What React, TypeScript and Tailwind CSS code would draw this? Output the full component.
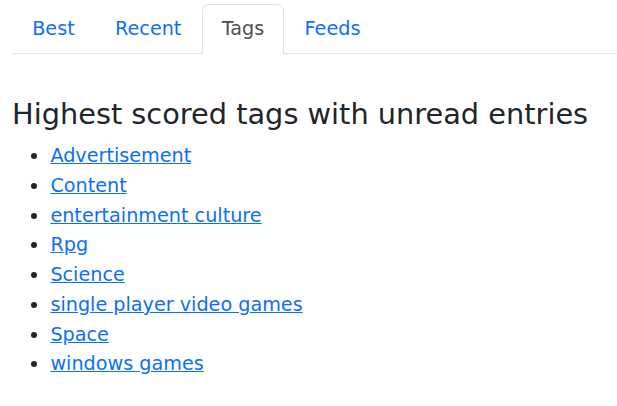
import React from 'react';

const tabs = ['Best', 'Recent', 'Tags', 'Feeds'];

const tags = [
  'Advertisement',
  'Content',
  'entertainment culture',
  'Rpg',
  'Science',
  'single player video games',
  'Space',
  'windows games',
];

const App = () => {
  return (
    <div className="min-h-screen bg-white pl-3 pt-1 text-[#212529]" style={{ fontFamily: '"DejaVu Sans", sans-serif' }}>
      <ul className="flex border-b border-[#dee2e6]">
        {tabs.map((tab) => {
          const active = tab === 'Tags';
          return (
            <li key={tab} className="-mb-px">
              <a
                href="#"
                className={
                  active
                    ? 'block rounded-t-[7px] border border-[#dee2e6] border-b-white bg-white px-[19.2px] py-[9.6px] text-[19.2px] leading-[28.8px] text-[#495057]'
                    : 'block rounded-t-[7px] border border-transparent px-[19.2px] py-[9.6px] text-[19.2px] leading-[28.8px] text-[#0d6efd]'
                }
              >
                {tab}
              </a>
            </li>
          );
        })}
      </ul>

      <h2 className="mt-[43px] mb-[9.6px] text-[28.8px] leading-[34.56px] font-normal">
        Highest scored tags with unread entries
      </h2>
      <ul className="list-disc pl-[2em] text-[19.2px] leading-[29.75px]">
        {tags.map((tag) => (
          <li key={tag}>
            <a href="#" className="text-[#0d6efd] underline">
              {tag}
            </a>
          </li>
        ))}
      </ul>
    </div>
  );
};

export default App;
